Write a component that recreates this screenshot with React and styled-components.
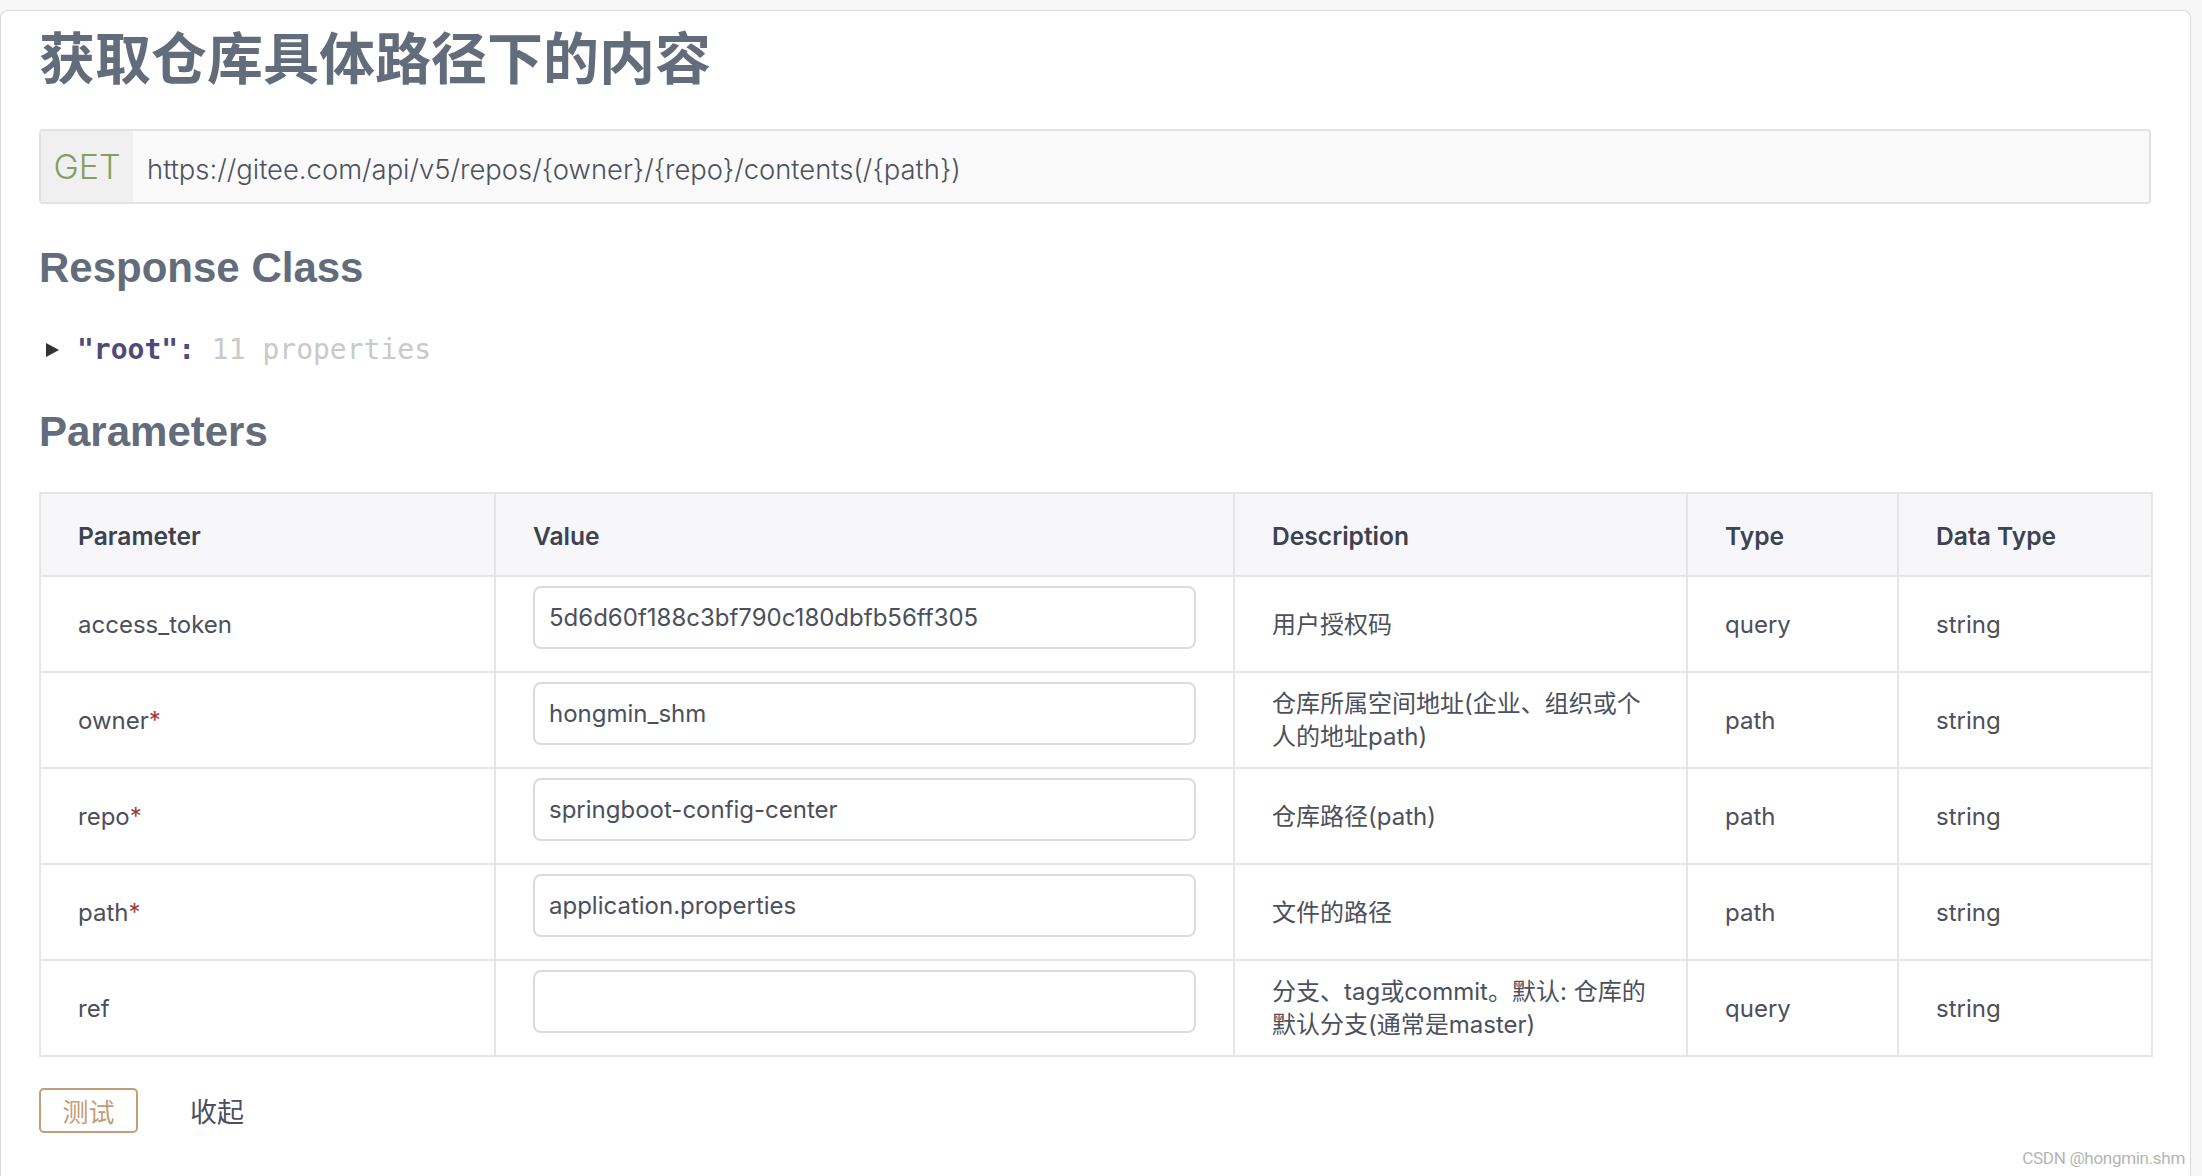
import React from 'react';
import styled, { createGlobalStyle } from 'styled-components';

const GlobalStyle = createGlobalStyle`
  html, body {
    margin: 0;
    padding: 0;
    background: #f6f6f6;
  }

  body {
    font-family: "Inter", "Noto Sans CJK SC", sans-serif;
    color: #4b505c;
    overflow: hidden;
  }
`;

const Page = styled.div`
  height: 1176px;
  padding-top: 10px;
  box-sizing: border-box;
`;

const Card = styled.div`
  position: relative;
  width: 2191px;
  height: 1166px;
  box-sizing: border-box;
  padding: 10px 39px 0 38px;

  background: #fff;
  border: 1px solid #dcdcdc;
  border-bottom: none;
  border-radius: 8px 8px 0 0;
`;

const Title = styled.h1`
  margin: 0;

  font-family: "Noto Sans CJK SC", sans-serif;
  font-size: 56px;
  line-height: 67px;
  font-weight: 700;
  color: #636c7b;
`;

const Endpoint = styled.div`
  margin-top: 41px;
  height: 75px;
  box-sizing: border-box;

  display: flex;
  align-items: stretch;

  background: #fafafa;
  border: 2px solid #e2e2e2;
  border-radius: 4px;
`;

const Method = styled.span`
  width: 92px;

  display: flex;
  align-items: center;
  justify-content: center;

  background: #f0f0f0;
  font-size: 34px;
  font-weight: 300;
  color: #84a05e;
`;

const Url = styled.span`
  padding: 5px 0 0 14px;

  display: flex;
  align-items: center;

  font-size: 27.4px;
  font-weight: 300;
  color: #4d525d;
`;

const SectionTitle = styled.h2`
  margin: ${props => props.$top}px 0 0;

  font-family: "Liberation Sans", sans-serif;
  font-size: 42px;
  line-height: 48px;
  font-weight: 700;
  color: #636c7b;
`;

const ModelLine = styled.div`
  margin-top: 38px;
  padding-left: 7px;

  display: flex;
  align-items: center;

  font-family: "DejaVu Sans Mono", monospace;
  font-size: 28px;
  line-height: 40px;
`;

const Caret = styled.span`
  width: 0;
  height: 0;
  margin-right: 18px;

  border-top: 7px solid transparent;
  border-bottom: 7px solid transparent;
  border-left: 13px solid #333;
`;

const Key = styled.span`
  font-weight: 700;
  color: #4f4a7a;
  white-space: pre;
`;

const Count = styled.span`
  color: #c9c9c9;
  white-space: pre;
`;

const Table = styled.table`
  margin-top: 36px;
  width: 2112px;

  table-layout: fixed;
  border-collapse: collapse;
  border: 2px solid #dedede;
`;

const Th = styled.th`
  height: 79px;
  padding: 2px 37px 0;

  background: #f7f7f9;
  border: 2px solid #e6e6e6;
  text-align: left;

  font-size: 24.6px;
  font-weight: 600;
  color: #3d4250;
`;

const Td = styled.td`
  height: 94px;
  padding: 0 37px;

  border: 2px solid #e6e6e6;
  vertical-align: middle;

  font-size: 24px;
  line-height: 33px;
  color: #4b505c;
`;

const Required = styled.span`
  color: #a33a3a;
`;

const Input = styled.input`
  width: 100%;
  height: 63px;
  box-sizing: border-box;
  margin: 0 0 14px;
  padding: 0 14px;

  display: block;
  background: #fff;
  border: 2px solid #dcdcdc;
  border-radius: 8px;
  outline: none;

  font-family: "Inter", sans-serif;
  font-size: 24px;
  color: #4b505c;
`;

const Actions = styled.div`
  margin-top: 31px;

  display: flex;
  align-items: center;
  gap: 52px;
`;

const TryButton = styled.button`
  width: 99px;
  height: 45px;
  padding: 0;

  background: #fff;
  border: 2px solid #c39d78;
  border-radius: 5px;

  font-family: "Noto Sans CJK SC", sans-serif;
  font-size: 26px;
  color: #c39d78;
`;

const Collapse = styled.span`
  font-family: "Noto Sans CJK SC", sans-serif;
  font-size: 27px;
  color: #4b505c;
`;

const Watermark = styled.div`
  position: absolute;
  right: 5px;
  bottom: 8px;

  font-family: "Roboto", sans-serif;
  font-size: 17px;
  letter-spacing: -0.3px;
  color: #b5b5b5;
`;

const params = [
  { name: 'access_token', value: '5d6d60f188c3bf790c180dbfb56ff305', desc: '用户授权码', type: 'query' },
  { name: 'owner', required: true, value: 'hongmin_shm', desc: '仓库所属空间地址(企业、组织或个人的地址path)', type: 'path' },
  { name: 'repo', required: true, value: 'springboot-config-center', desc: '仓库路径(path)', type: 'path' },
  { name: 'path', required: true, value: 'application.properties', desc: '文件的路径', type: 'path' },
  { name: 'ref', value: '', desc: '分支、tag或commit。默认: 仓库的默认分支(通常是master)', type: 'query' },
];

export default function App() {
  return (
    <Page>
      <GlobalStyle />
      <Card>
        <Title>获取仓库具体路径下的内容</Title>
        <Endpoint>
          <Method>GET</Method>
          <Url>https://gitee.com/api/v5/repos/{'{owner}'}/{'{repo}'}/contents(/{'{path}'})</Url>
        </Endpoint>

        <SectionTitle $top={40}>Response Class</SectionTitle>
        <ModelLine>
          <Caret />
          <Key>"root": </Key>
          <Count>11 properties</Count>
        </ModelLine>

        <SectionTitle $top={38}>Parameters</SectionTitle>
        <Table>
          <colgroup>
            <col style={{ width: 455 }} />
            <col style={{ width: 739 }} />
            <col style={{ width: 453 }} />
            <col style={{ width: 211 }} />
            <col style={{ width: 254 }} />
          </colgroup>
          <thead>
            <tr>
              <Th>Parameter</Th>
              <Th>Value</Th>
              <Th>Description</Th>
              <Th>Type</Th>
              <Th>Data Type</Th>
            </tr>
          </thead>
          <tbody>
            {params.map(p => (
              <tr key={p.name}>
                <Td>
                  {p.name}
                  {p.required && <Required>*</Required>}
                </Td>
                <Td>
                  <Input defaultValue={p.value} />
                </Td>
                <Td>{p.desc}</Td>
                <Td>{p.type}</Td>
                <Td>string</Td>
              </tr>
            ))}
          </tbody>
        </Table>

        <Actions>
          <TryButton>测试</TryButton>
          <Collapse>收起</Collapse>
        </Actions>

        <Watermark>CSDN @hongmin.shm</Watermark>
      </Card>
    </Page>
  );
}
